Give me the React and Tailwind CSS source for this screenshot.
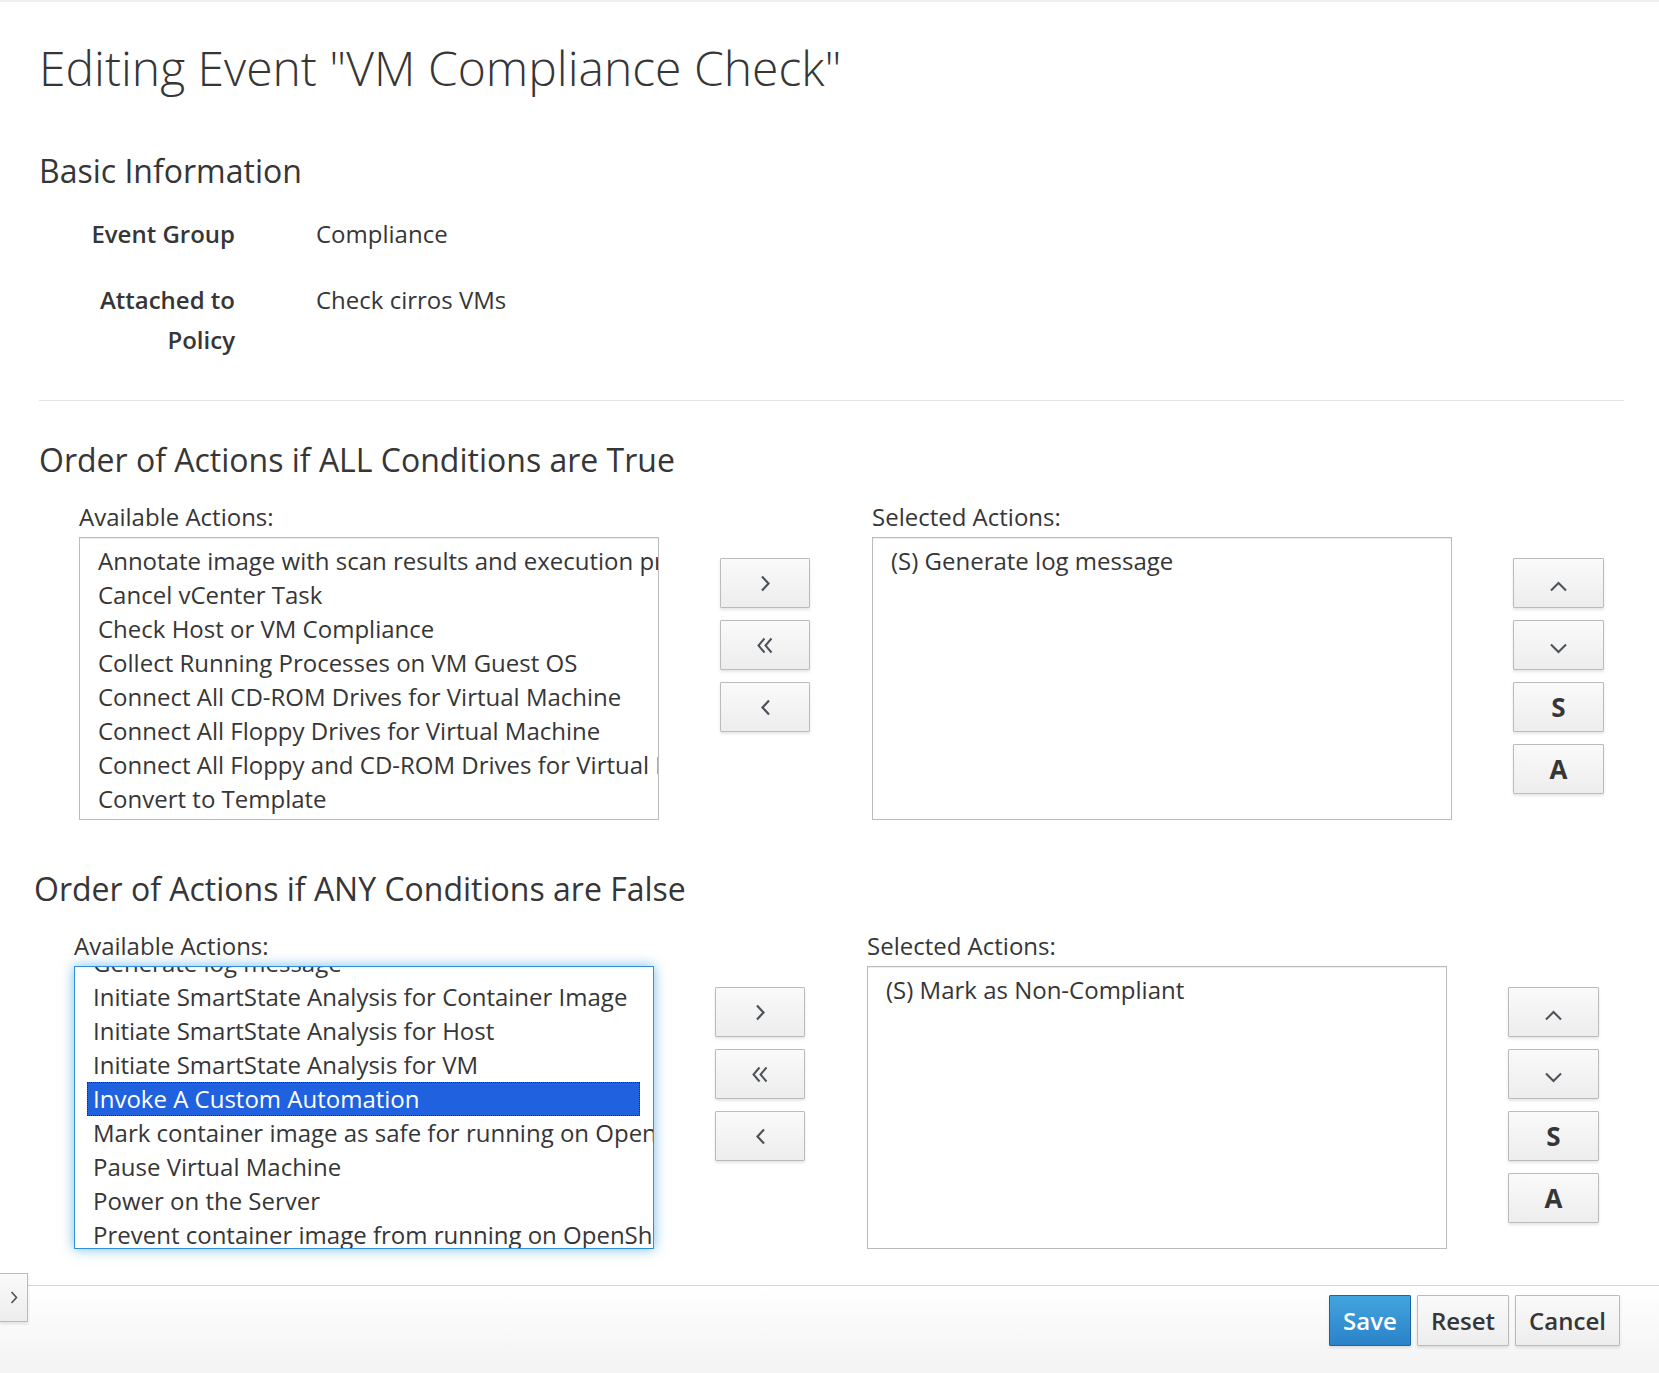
import React from 'react'

const allTrueAvailable = [
  'Annotate image with scan results and execution profile',
  'Cancel vCenter Task',
  'Check Host or VM Compliance',
  'Collect Running Processes on VM Guest OS',
  'Connect All CD-ROM Drives for Virtual Machine',
  'Connect All Floppy Drives for Virtual Machine',
  'Connect All Floppy and CD-ROM Drives for Virtual Machine',
  'Convert to Template',
]

const anyFalseAvailable = [
  'Generate log message',
  'Initiate SmartState Analysis for Container Image',
  'Initiate SmartState Analysis for Host',
  'Initiate SmartState Analysis for VM',
  'Invoke A Custom Automation',
  'Mark container image as safe for running on OpenShift',
  'Pause Virtual Machine',
  'Power on the Server',
  'Prevent container image from running on OpenShift',
]

const Chevron = ({ dir }) => {
  if (dir === 'right')
    return (
      <svg width="11" height="17" viewBox="0 0 11 17" fill="none" stroke="#4d5258" strokeWidth="2.2">
        <path d="M2 1.5 L8.5 8.5 L2 15.5" />
      </svg>
    )
  if (dir === 'left')
    return (
      <svg width="11" height="17" viewBox="0 0 11 17" fill="none" stroke="#4d5258" strokeWidth="2.2">
        <path d="M9 1.5 L2.5 8.5 L9 15.5" />
      </svg>
    )
  if (dir === 'dleft')
    return (
      <svg width="18" height="17" viewBox="0 0 18 17" fill="none" stroke="#4d5258" strokeWidth="2">
        <path d="M8.5 1.5 L2.5 8.5 L8.5 15.5" />
        <path d="M15.5 1.5 L9.5 8.5 L15.5 15.5" />
      </svg>
    )
  if (dir === 'up')
    return (
      <svg width="19" height="11" viewBox="0 0 19 11" fill="none" stroke="#4d5258" strokeWidth="2.1" className="mt-[6px]">
        <path d="M2 9.5 L9.5 2 L17 9.5" />
      </svg>
    )
  return (
    <svg width="19" height="11" viewBox="0 0 19 11" fill="none" stroke="#4d5258" strokeWidth="2.1" className="mt-[6px]">
      <path d="M2 1.5 L9.5 9 L17 1.5" />
    </svg>
  )
}

function Btn({ children, className = '' }) {
  return (
    <button
      className={`h-[50px] flex items-center justify-center border border-[#bbbbbb] rounded-[1px] bg-linear-to-b from-[#fafafa] to-[#ededed] shadow-[0_2px_3px_rgba(3,3,3,0.1)] text-[#363636] ${className}`}
    >
      {children}
    </button>
  )
}

function ListBox({ items, offset = 6, selected, focused }) {
  return (
    <div
      className={`h-[283px] overflow-hidden bg-white border ${
        focused
          ? 'border-[#2f8ee0] shadow-[0_0_12px_rgba(0,136,206,0.55)]'
          : 'border-[#bbbbbb] shadow-[inset_0_1px_1px_rgba(3,3,3,0.075)]'
      }`}
    >
      <div className="pl-[12px] pr-[13px]" style={{ marginTop: offset }}>
        {items.map(it => (
          <div
            key={it}
            className={`h-[34px] leading-[34px] pl-[6px] whitespace-nowrap text-[24px] ${
              it === selected
                ? 'bg-[#1f61df] text-white outline-1 outline-dotted outline-[#0d2a86] -outline-offset-1'
                : ''
            }`}
          >
            {it}
          </div>
        ))}
      </div>
    </div>
  )
}

function ActionsSection({ title, available, offset, selected, focused, chosen, className = '' }) {
  return (
    <section className={className}>
      <h3 className="text-[32px] leading-[36px]">{title}</h3>
      <div className="flex items-start pl-[40px] mt-[24px]">
        <div className="w-[580px]">
          <p className="text-[24px] leading-[30px]">Available Actions:</p>
          <div className="mt-[5px]">
            <ListBox items={available} offset={offset} selected={selected} focused={focused} />
          </div>
        </div>

        <div className="ml-[61px] w-[90px] mt-[56px] flex flex-col gap-[12px]">
          <Btn><Chevron dir="right" /></Btn>
          <Btn><Chevron dir="dleft" /></Btn>
          <Btn><Chevron dir="left" /></Btn>
        </div>

        <div className="ml-[62px] w-[580px]">
          <p className="text-[24px] leading-[30px]">Selected Actions:</p>
          <div className="mt-[5px]">
            <ListBox items={chosen} />
          </div>
        </div>

        <div className="ml-[61px] w-[91px] mt-[56px] flex flex-col gap-[12px]">
          <Btn><Chevron dir="up" /></Btn>
          <Btn><Chevron dir="down" /></Btn>
          <Btn className="text-[26px] font-bold">S</Btn>
          <Btn className="text-[26px] font-bold">A</Btn>
        </div>
      </div>
    </section>
  )
}

export default function App() {
  return (
    <div className="min-h-[1373px] flex flex-col bg-white text-[#363636] font-['Open_Sans',sans-serif]">
      <div className="h-[2px] bg-[#f0f0f0]" />

      <main className="pl-[39px] pr-[35px]">
        <h1 className="mt-[40px] text-[48px] leading-[52px] font-light">
          Editing Event "VM Compliance Check"
        </h1>

        <h3 className="mt-[59px] text-[32px] leading-[36px]">Basic Information</h3>

        <div className="mt-[25px] text-[24px] leading-[40px]">
          <div className="flex">
            <div className="w-[196px] text-right font-semibold">Event Group</div>
            <div className="ml-[81px]">Compliance</div>
          </div>
          <div className="flex mt-[26px]">
            <div className="w-[196px] text-right font-semibold">
              Attached to<br />Policy
            </div>
            <div className="ml-[81px]">Check cirros VMs</div>
          </div>
        </div>

        <hr className="mt-[40px] border-0 border-t border-[#e5e5e5]" />

        <ActionsSection
          className="mt-[41px]"
          title="Order of Actions if ALL Conditions are True"
          available={allTrueAvailable}
          chosen={['(S) Generate log message']}
        />

        <ActionsSection
          className="mt-[51px] -ml-[5px]"
          title="Order of Actions if ANY Conditions are False"
          available={anyFalseAvailable}
          offset={-21}
          selected="Invoke A Custom Automation"
          focused
          chosen={['(S) Mark as Non-Compliant']}
        />
      </main>

      <footer className="relative mt-[36px] h-[88px] border-t border-[#d6d6d6] bg-linear-to-b from-white to-[#f3f3f3] flex justify-end items-start pt-[9px] pr-[39px] gap-[6px]">
        <button className="absolute left-0 -top-[13px] w-[28px] h-[49px] flex items-center justify-center border border-l-0 border-[#bbbbbb] bg-linear-to-b from-[#fafafa] to-[#ededed] shadow-[0_2px_3px_rgba(3,3,3,0.1)]">
          <svg width="8" height="13" viewBox="0 0 8 13" fill="none" stroke="#4d5258" strokeWidth="1.6">
            <path d="M1.5 1 L6.5 6.5 L1.5 12" />
          </svg>
        </button>

        <button className="w-[82px] h-[51px] border border-[#1c65a3] rounded-[1px] bg-linear-to-b from-[#42a5dd] to-[#2b82c9] text-white text-[24px] font-semibold shadow-[0_2px_3px_rgba(3,3,3,0.1)]">
          Save
        </button>
        <button className="w-[92px] h-[51px] border border-[#bbbbbb] rounded-[1px] bg-linear-to-b from-[#fafafa] to-[#ededed] text-[#363636] text-[24px] font-semibold shadow-[0_2px_3px_rgba(3,3,3,0.1)]">
          Reset
        </button>
        <button className="w-[105px] h-[51px] border border-[#bbbbbb] rounded-[1px] bg-linear-to-b from-[#fafafa] to-[#ededed] text-[#363636] text-[24px] font-semibold shadow-[0_2px_3px_rgba(3,3,3,0.1)]">
          Cancel
        </button>
      </footer>
    </div>
  )
}
